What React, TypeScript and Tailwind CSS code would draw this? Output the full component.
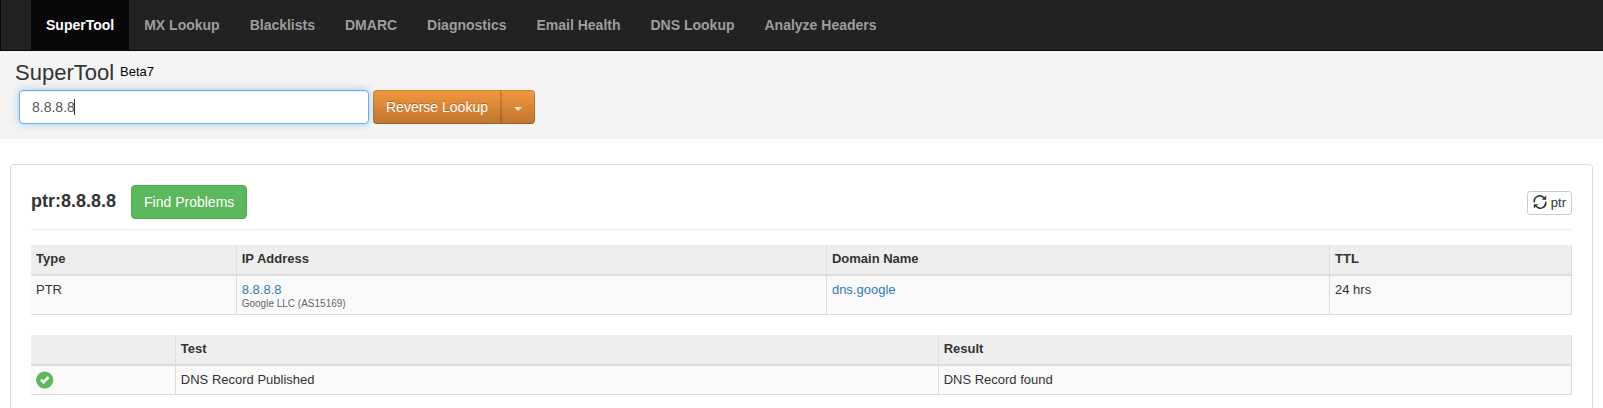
const links = ["SuperTool", "MX Lookup", "Blacklists", "DMARC", "Diagnostics", "Email Health", "DNS Lookup", "Analyze Headers"];

const th = "border-r border-b-2 border-[#ddd] px-[5px] pt-1 pb-[5px] text-left font-bold leading-5";
const td = "border-r border-b border-[#ddd] p-[5px] align-top leading-[18px]";

function RefreshIcon() {
  return (
    <svg className="mb-[2px]" width="14" height="14" viewBox="0 0 14 14" aria-hidden="true" fill="none" stroke="#333" strokeWidth="1.6">
      <path d="M1.4 7.4A5.4 5.4 0 0 1 10.9 2.9" />
      <path d="M12.6 6.6A5.4 5.4 0 0 1 3.1 11.1" />
      <path d="M13.2 0.6V4.8H8.8Z" fill="#333" stroke="none" />
      <path d="M0.8 13.4V9.2H5.2Z" fill="#333" stroke="none" />
    </svg>
  );
}

function CheckIcon() {
  return (
    <svg className="block" width="18" height="18" viewBox="0 0 18 18" role="img" aria-label="Passed">
      <circle cx="8.7" cy="9" r="8.6" fill="#5cb85c" />
      <path d="M5 8.6 7.6 11.1 12.5 6.2" fill="none" stroke="#fff" strokeWidth="2.6" />
    </svg>
  );
}

export default function App() {
  return (
    <div className="bg-white font-['Liberation_Sans',Arial,sans-serif] text-[13px] text-[#333]">
      <nav className="flex border-b border-l border-[#080808] bg-[#222] pl-[30px]">
        {links.map((label, i) => (
          <a
            key={label}
            href="#"
            aria-current={i === 0 ? "page" : undefined}
            className={
              i === 0
                ? "bg-[#080808] p-[15px] text-sm font-bold text-white"
                : "p-[15px] text-sm font-bold text-[#9d9d9d]"
            }
          >
            {label}
          </a>
        ))}
      </nav>

      <header className="bg-[#f4f4f4] px-[15px] pt-2 pb-[15px]">
        <div className="flex items-start gap-[6px]">
          <h1 className="text-[22px] leading-[27px]">SuperTool</h1>
          <span className="leading-[25px] text-black">Beta7</span>
        </div>
        <form className="mt-1 flex gap-1 px-1" onSubmit={(e) => e.preventDefault()}>
          <div className="relative">
            <input
              type="text"
              aria-label="Lookup query"
              defaultValue="8.8.8.8"
              className="h-[34px] w-[350px] rounded border border-[#66afe9] bg-white px-3 text-sm text-[#555] caret-transparent shadow-[inset_0_1px_1px_rgba(0,0,0,0.075),0_0_8px_rgba(102,175,233,0.6)] outline-none"
            />
            <span aria-hidden="true" className="pointer-events-none absolute top-[9px] left-[55px] h-4 w-px bg-[#333]" />
          </div>
          <div className="flex rounded bg-linear-to-b from-[#f3983e] to-[#bf752f]">
            <button
              type="submit"
              className="h-[34px] rounded-l border border-black/15 border-b-black/20 px-3 text-sm text-white [text-shadow:0_-1px_0_rgba(0,0,0,0.25)]"
            >
              Reverse Lookup
            </button>
            <button
              type="button"
              aria-label="More lookups"
              className="flex h-[34px] w-[34px] items-center justify-center rounded-r border border-black/15 border-b-black/20"
            >
              <svg className="mt-1" width="8" height="4" viewBox="0 0 8 4" aria-hidden="true">
                <path d="M0 0H8L4 4Z" fill="#f8e3cf" />
              </svg>
            </button>
          </div>
        </form>
      </header>

      <main className="mx-[10px] mt-[25px] rounded-t border border-b-0 border-[#ddd] px-5 pt-5 pb-[13px]">
        <div className="flex items-center justify-between border-b border-[#eee] pb-[10px]">
          <div className="flex items-start gap-[15px]">
            <h2 className="text-lg leading-8 font-bold">ptr:8.8.8.8</h2>
            <button type="button" className="h-[34px] rounded border border-[#4cae4c] bg-[#5cb85c] px-3 text-sm text-white">
              Find Problems
            </button>
          </div>
          <button type="button" className="mt-[2px] flex h-6 items-center gap-1 rounded-[3px] border border-[#ccc] bg-white px-[5px]">
            <RefreshIcon />
            ptr
          </button>
        </div>

        <table className="mt-[15px] w-full table-fixed border-separate border-spacing-0">
          <colgroup>
            <col className="w-[13.35%]" />
            <col className="w-[38.3%]" />
            <col className="w-[32.65%]" />
            <col />
          </colgroup>
          <thead className="bg-[#eee]">
            <tr>
              <th className={th}>Type</th>
              <th className={th}>IP Address</th>
              <th className={th}>Domain Name</th>
              <th className={th}>TTL</th>
            </tr>
          </thead>
          <tbody className="bg-[#f9f9f9]">
            <tr>
              <td className={td}>PTR</td>
              <td className={td}>
                <a href="#" className="text-[#337ab7]">8.8.8.8</a>
                <div className="text-[10px] leading-[10px] text-[#666]">Google LLC (AS15169)</div>
              </td>
              <td className={td}>
                <a href="#" className="text-[#337ab7]">dns.google</a>
              </td>
              <td className={td}>24 hrs</td>
            </tr>
          </tbody>
        </table>

        <table className="mt-5 w-full table-fixed border-separate border-spacing-0">
          <colgroup>
            <col className="w-[9.4%]" />
            <col className="w-[49.5%]" />
            <col />
          </colgroup>
          <thead className="bg-[#eee]">
            <tr>
              <th className={th} aria-label="Status"></th>
              <th className={th}>Test</th>
              <th className={th}>Result</th>
            </tr>
          </thead>
          <tbody className="bg-[#f9f9f9]">
            <tr>
              <td className={td}>
                <CheckIcon />
              </td>
              <td className={td}>DNS Record Published</td>
              <td className={td}>DNS Record found</td>
            </tr>
          </tbody>
        </table>
      </main>
    </div>
  );
}
